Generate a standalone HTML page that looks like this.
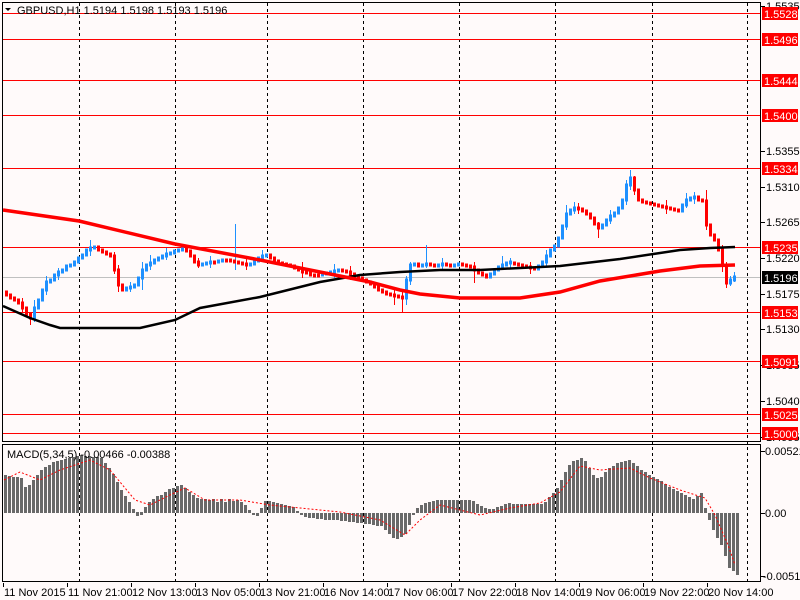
<!DOCTYPE html>
<html><head><meta charset="utf-8"><style>
html,body{margin:0;padding:0;background:#fffafa;width:800px;height:600px;overflow:hidden}
svg{display:block}
text{font-family:"Liberation Sans",sans-serif;font-size:11px}
</style></head><body>
<svg width="800" height="600" xmlns="http://www.w3.org/2000/svg">
<rect x="0" y="0" width="800" height="600" fill="#fffafa"/>
<g stroke="#000" stroke-dasharray="3,3">
<line x1="79.5" y1="3" x2="79.5" y2="582"/><line x1="175.5" y1="3" x2="175.5" y2="582"/><line x1="267.5" y1="3" x2="267.5" y2="582"/><line x1="363.5" y1="3" x2="363.5" y2="582"/><line x1="459.5" y1="3" x2="459.5" y2="582"/><line x1="555.5" y1="3" x2="555.5" y2="582"/><line x1="652.5" y1="3" x2="652.5" y2="582"/><line x1="747.5" y1="3" x2="747.5" y2="582"/>
</g>
<g stroke="#f00">
<line x1="3" y1="13.5" x2="760" y2="13.5"/><line x1="3" y1="39.5" x2="760" y2="39.5"/><line x1="3" y1="80.5" x2="760" y2="80.5"/><line x1="3" y1="115.5" x2="760" y2="115.5"/><line x1="3" y1="168.5" x2="760" y2="168.5"/><line x1="3" y1="247.5" x2="760" y2="247.5"/><line x1="3" y1="312.5" x2="760" y2="312.5"/><line x1="3" y1="361.5" x2="760" y2="361.5"/><line x1="3" y1="414.5" x2="760" y2="414.5"/><line x1="3" y1="433.5" x2="760" y2="433.5"/>
</g>
<line x1="3" y1="277.5" x2="760" y2="277.5" stroke="#c0c0c0"/>
<g stroke-width="1">
<path stroke="#1e90ff" d="M34.5,300V322M46.5,276V295M58.5,268V280M90.5,240V256M130.5,282V292M142.5,262V290M150.5,255V270M166.5,248V260M210.5,256V268M235.5,224V270M262.5,250V262M334.5,264V278M406.5,276V305M410.5,262V285M426.5,245V268M442.5,258V270M502.5,256V270M510.5,258V268M546.5,250V266M566.5,205V230M574.5,202V214M610.5,210V224M626.5,180V205M630.5,170V190M686.5,193V208M694.5,192V204M734.5,272V282M730.5,276V286"/>
<path stroke="#f00" d="M22.5,298V312M30.5,312V325M114.5,252V274M118.5,265V292M198.5,258V268M246.5,258V270M302.5,262V278M350.5,266V280M394.5,290V305M402.5,292V312M474.5,262V283M530.5,262V274M578.5,203V214M598.5,222V238M634.5,176V195M666.5,200V214M706.5,190V230M722.5,245V272M726.5,262V288"/>
</g>
<path stroke="#f00" stroke-width="3" stroke-linecap="square" fill="none" d="M6.5,292V295M10.5,295V298M14.5,298V300M18.5,300V303M22.5,303V308M26.5,308V314M30.5,314V318M98.5,247V250M102.5,250V252M106.5,252V254M110.5,254V256M114.5,256V270M118.5,270V285M122.5,285V290M186.5,249V251M190.5,251V256M194.5,256V262M198.5,262V265M214.5,262V263M226.5,260V261M230.5,260V261M234.5,261V262M238.5,262V263M242.5,263V264M246.5,264V265M270.5,255V258M274.5,258V261M278.5,261V263M282.5,263V264M286.5,264V265M290.5,265V266M294.5,266V268M298.5,268V270M302.5,270V272M306.5,272V273M310.5,273V275M314.5,275V276M318.5,275V276M342.5,270V271M346.5,271V272M350.5,272V274M354.5,274V276M358.5,276V278M362.5,278V280M366.5,280V282M370.5,282V284M374.5,284V287M378.5,287V290M382.5,290V292M386.5,292V294M390.5,294V295M394.5,295V296M398.5,296V297M402.5,297V298M418.5,264V266M430.5,264V265M434.5,265V266M446.5,264V265M450.5,265V266M462.5,264V265M466.5,265V266M470.5,266V267M474.5,267V270M478.5,270V273M482.5,273V275M486.5,275V277M514.5,263V264M518.5,264V265M522.5,265V266M526.5,266V267M530.5,267V268M534.5,268V269M578.5,208V209M582.5,209V211M586.5,211V214M590.5,214V218M594.5,218V224M598.5,224V228M634.5,178V190M638.5,190V200M642.5,200V202M646.5,202V203M650.5,203V204M654.5,204V205M658.5,205V206M662.5,206V207M666.5,207V208M670.5,208V209M674.5,209V210M678.5,210V211M698.5,197V200M702.5,200V201M706.5,201V225M710.5,225V235M714.5,235V240M718.5,240V250M722.5,250V265M726.5,265V283"/>
<path stroke="#1e90ff" stroke-width="3" stroke-linecap="square" fill="none" d="M34.5,308V318M38.5,300V308M42.5,290V300M46.5,282V290M50.5,280V282M54.5,275V280M58.5,272V275M62.5,270V272M66.5,266V270M70.5,265V266M74.5,262V265M78.5,258V262M82.5,255V258M86.5,250V255M90.5,248V250M94.5,247V248M126.5,288V290M130.5,287V288M134.5,285V287M138.5,278V285M142.5,270V278M146.5,265V270M150.5,263V265M154.5,260V263M158.5,258V260M162.5,256V258M166.5,254V256M170.5,253V254M174.5,251V253M178.5,250V251M182.5,249V250M202.5,264V265M206.5,263V264M210.5,262V263M218.5,261V262M222.5,260V261M250.5,264V265M254.5,261V264M258.5,258V261M262.5,256V258M266.5,255V256M322.5,274V275M326.5,273V274M330.5,272V273M334.5,271V272M338.5,270V271M406.5,280V298M410.5,265V280M414.5,264V265M422.5,265V266M426.5,264V265M438.5,265V266M442.5,264V265M454.5,265V266M458.5,264V265M490.5,274V277M494.5,270V274M498.5,267V270M502.5,265V267M506.5,263V265M510.5,262V263M538.5,266V269M542.5,262V266M546.5,256V262M550.5,250V256M554.5,246V250M558.5,238V246M562.5,226V238M566.5,214V226M570.5,210V214M574.5,208V210M602.5,225V228M606.5,220V225M610.5,216V220M614.5,213V216M618.5,208V213M622.5,200V208M626.5,185V200M630.5,178V185M682.5,205V211M686.5,200V205M690.5,198V200M694.5,197V198M730.5,280V283M734.5,277V280"/>
<polyline fill="none" stroke="#000" stroke-width="2.5" points="3,306 30,318 50,325 60,328 140,328 175,320 200,308 260,297 320,282 360,275 400,272 440,270 480,270 560,266 620,259 680,250 710,248 735,247"/>
<polyline fill="none" stroke="#f00" stroke-width="3.5" points="3,210 79,221 175,244 260,260 300,268 370,282 400,290 420,294 460,298 520,298 560,292 600,281 660,271 700,266 735,265"/>
<rect x="2.5" y="2.5" width="758" height="439" fill="none" stroke="#000"/>
<rect x="2.5" y="444.5" width="758" height="137" fill="none" stroke="#000"/>
<path stroke="#696969" stroke-width="3" fill="none" d="M5.5,513V475M9.5,513V476M13.5,513V477M17.5,513V477M21.5,513V478M25.5,513V487M29.5,513V485M33.5,513V480M37.5,513V475M41.5,513V470M45.5,513V467M49.5,513V465M53.5,513V462M57.5,513V461M61.5,513V460M65.5,513V459M69.5,513V458M73.5,513V457M77.5,513V456M81.5,513V455M85.5,513V456M89.5,513V456M93.5,513V457M97.5,513V457M101.5,513V458M105.5,513V463M109.5,513V468M113.5,513V474M117.5,513V482M121.5,513V490M125.5,513V496M129.5,513V502M133.5,513V509M137.5,512V516M141.5,512V515M145.5,513V507M149.5,513V502M153.5,513V499M157.5,513V496M161.5,513V495M165.5,513V492M169.5,513V489M173.5,513V488M177.5,513V486M181.5,513V485M185.5,513V488M189.5,513V492M193.5,513V495M197.5,513V498M201.5,513V499M205.5,513V499M209.5,513V500M213.5,513V499M217.5,513V502M221.5,513V499M225.5,513V502M229.5,513V499M233.5,513V501M237.5,513V500M241.5,513V502M245.5,513V505M249.5,513V510M253.5,513V515M257.5,513V516M261.5,513V508M265.5,513V501M269.5,513V501M273.5,513V502M277.5,513V503M281.5,513V504M285.5,513V505M289.5,513V506M293.5,513V507M297.5,513V511M301.5,513V515M305.5,513V517M309.5,513V518M313.5,513V518M317.5,513V519M321.5,513V519M325.5,513V520M329.5,513V520M333.5,513V520M337.5,513V520M341.5,513V521M345.5,513V521M349.5,513V522M353.5,513V522M357.5,513V523M361.5,513V523M365.5,513V524M369.5,513V524M373.5,513V525M377.5,513V526M381.5,513V526M385.5,513V530M389.5,513V534M393.5,513V538M397.5,513V539M401.5,513V537M405.5,513V534M409.5,513V525M413.5,513V515M417.5,513V508M421.5,513V505M425.5,513V503M429.5,513V502M433.5,513V501M437.5,513V500M441.5,513V500M445.5,513V500M449.5,513V500M453.5,513V500M457.5,513V500M461.5,513V500M465.5,513V500M469.5,513V500M473.5,513V501M477.5,513V504M481.5,513V506M485.5,513V508M489.5,513V509M493.5,513V509M497.5,513V507M501.5,513V506M505.5,513V504M509.5,513V503M513.5,513V504M517.5,513V504M521.5,513V504M525.5,513V504M529.5,513V504M533.5,513V504M537.5,513V504M541.5,513V504M545.5,513V502M549.5,513V497M553.5,513V493M557.5,513V488M561.5,513V480M565.5,513V472M569.5,513V465M573.5,513V461M577.5,513V460M581.5,513V458M585.5,513V461M589.5,513V468M593.5,513V475M597.5,513V478M601.5,513V477M605.5,513V472M609.5,513V468M613.5,513V466M617.5,513V463M621.5,513V462M625.5,513V461M629.5,513V460M633.5,513V463M637.5,513V466M641.5,513V470M645.5,513V472M649.5,513V475M653.5,513V477M657.5,513V479M661.5,513V481M665.5,513V484M669.5,513V487M673.5,513V489M677.5,513V491M681.5,513V493M685.5,513V495M689.5,513V497M693.5,513V499M697.5,513V496M701.5,513V493M705.5,513V508M709.5,513V520M713.5,513V530M717.5,513V538M721.5,513V545M725.5,513V556M729.5,513V568M733.5,513V571M737.5,513V575"/>
<polyline fill="none" stroke="#f00" stroke-dasharray="2,2" points="4,480 20,472 40,480 60,470 90,460 110,470 135,500 150,505 170,495 185,488 205,500 240,500 270,505 300,508 340,512 380,520 405,535 420,520 440,505 480,515 510,508 540,503 560,492 580,466 600,470 630,468 650,478 680,490 705,498 715,515 728,545 735,565"/>
<text x="7" y="458" fill="#000">MACD(5,34,5) -0.00466 -0.00388</text>
<polygon points="5,8 11,8 8,11" fill="#000"/>
<text x="17" y="14" fill="#000">GBPUSD,H1  1.5194 1.5198 1.5193 1.5196</text>
<g stroke="#000">
<line x1="761" y1="6.5" x2="765" y2="6.5"/><line x1="761" y1="151.5" x2="765" y2="151.5"/><line x1="761" y1="187.5" x2="765" y2="187.5"/><line x1="761" y1="222.5" x2="765" y2="222.5"/><line x1="761" y1="258.5" x2="765" y2="258.5"/><line x1="761" y1="294.5" x2="765" y2="294.5"/><line x1="761" y1="329.5" x2="765" y2="329.5"/><line x1="761" y1="365.5" x2="765" y2="365.5"/><line x1="761" y1="401.5" x2="765" y2="401.5"/><line x1="761" y1="437.5" x2="765" y2="437.5"/>
<line x1="761" y1="451.5" x2="765" y2="451.5"/><line x1="761" y1="513.5" x2="765" y2="513.5"/><line x1="761" y1="576.5" x2="765" y2="576.5"/>
</g>
<g fill="#000">
<text x="766" y="10">1.5535</text><text x="766" y="155">1.5355</text><text x="766" y="191">1.5310</text><text x="766" y="226">1.5265</text><text x="766" y="262">1.5220</text><text x="766" y="298">1.5175</text><text x="766" y="333">1.5130</text><text x="766" y="369">1.5085</text><text x="766" y="405">1.5040</text><text x="766" y="441">1.4995</text>
<text x="765" y="455">0.00521</text><text x="765" y="517">0.00</text><text x="763" y="580">-0.00513</text>
</g>
<g fill="#f00">
<rect x="762" y="7" width="36" height="13"/><rect x="762" y="33" width="36" height="13"/><rect x="762" y="74" width="36" height="13"/><rect x="762" y="109" width="36" height="13"/><rect x="762" y="162" width="36" height="13"/><rect x="762" y="241" width="36" height="13"/><rect x="762" y="306" width="36" height="13"/><rect x="762" y="355" width="36" height="13"/><rect x="762" y="408" width="36" height="13"/><rect x="762" y="427" width="36" height="13"/>
</g>
<rect x="762" y="271" width="36" height="13" fill="#000"/>
<g fill="#fff">
<text x="764" y="18">1.5528</text><text x="764" y="44">1.5496</text><text x="764" y="85">1.5444</text><text x="764" y="120">1.5400</text><text x="764" y="173">1.5334</text><text x="764" y="252">1.5235</text><text x="764" y="282">1.5196</text><text x="764" y="317">1.5153</text><text x="764" y="366">1.5091</text><text x="764" y="419">1.5025</text><text x="764" y="438">1.5000</text>
</g>
<g stroke="#000">
<line x1="3.5" y1="583" x2="3.5" y2="587"/><line x1="67.5" y1="583" x2="67.5" y2="587"/><line x1="131.5" y1="583" x2="131.5" y2="587"/><line x1="195.5" y1="583" x2="195.5" y2="587"/><line x1="259.5" y1="583" x2="259.5" y2="587"/><line x1="323.5" y1="583" x2="323.5" y2="587"/><line x1="387.5" y1="583" x2="387.5" y2="587"/><line x1="451.5" y1="583" x2="451.5" y2="587"/><line x1="515.5" y1="583" x2="515.5" y2="587"/><line x1="579.5" y1="583" x2="579.5" y2="587"/><line x1="643.5" y1="583" x2="643.5" y2="587"/><line x1="707.5" y1="583" x2="707.5" y2="587"/>
</g>
<g fill="#000">
<text x="4" y="596">11 Nov 2015</text><text x="68" y="596">11 Nov 21:00</text><text x="132" y="596">12 Nov 13:00</text><text x="196" y="596">13 Nov 05:00</text><text x="260" y="596">13 Nov 21:00</text><text x="324" y="596">16 Nov 14:00</text><text x="388" y="596">17 Nov 06:00</text><text x="452" y="596">17 Nov 22:00</text><text x="516" y="596">18 Nov 14:00</text><text x="580" y="596">19 Nov 06:00</text><text x="644" y="596">19 Nov 22:00</text><text x="708" y="596">20 Nov 14:00</text>
</g>
</svg>
</body></html>
